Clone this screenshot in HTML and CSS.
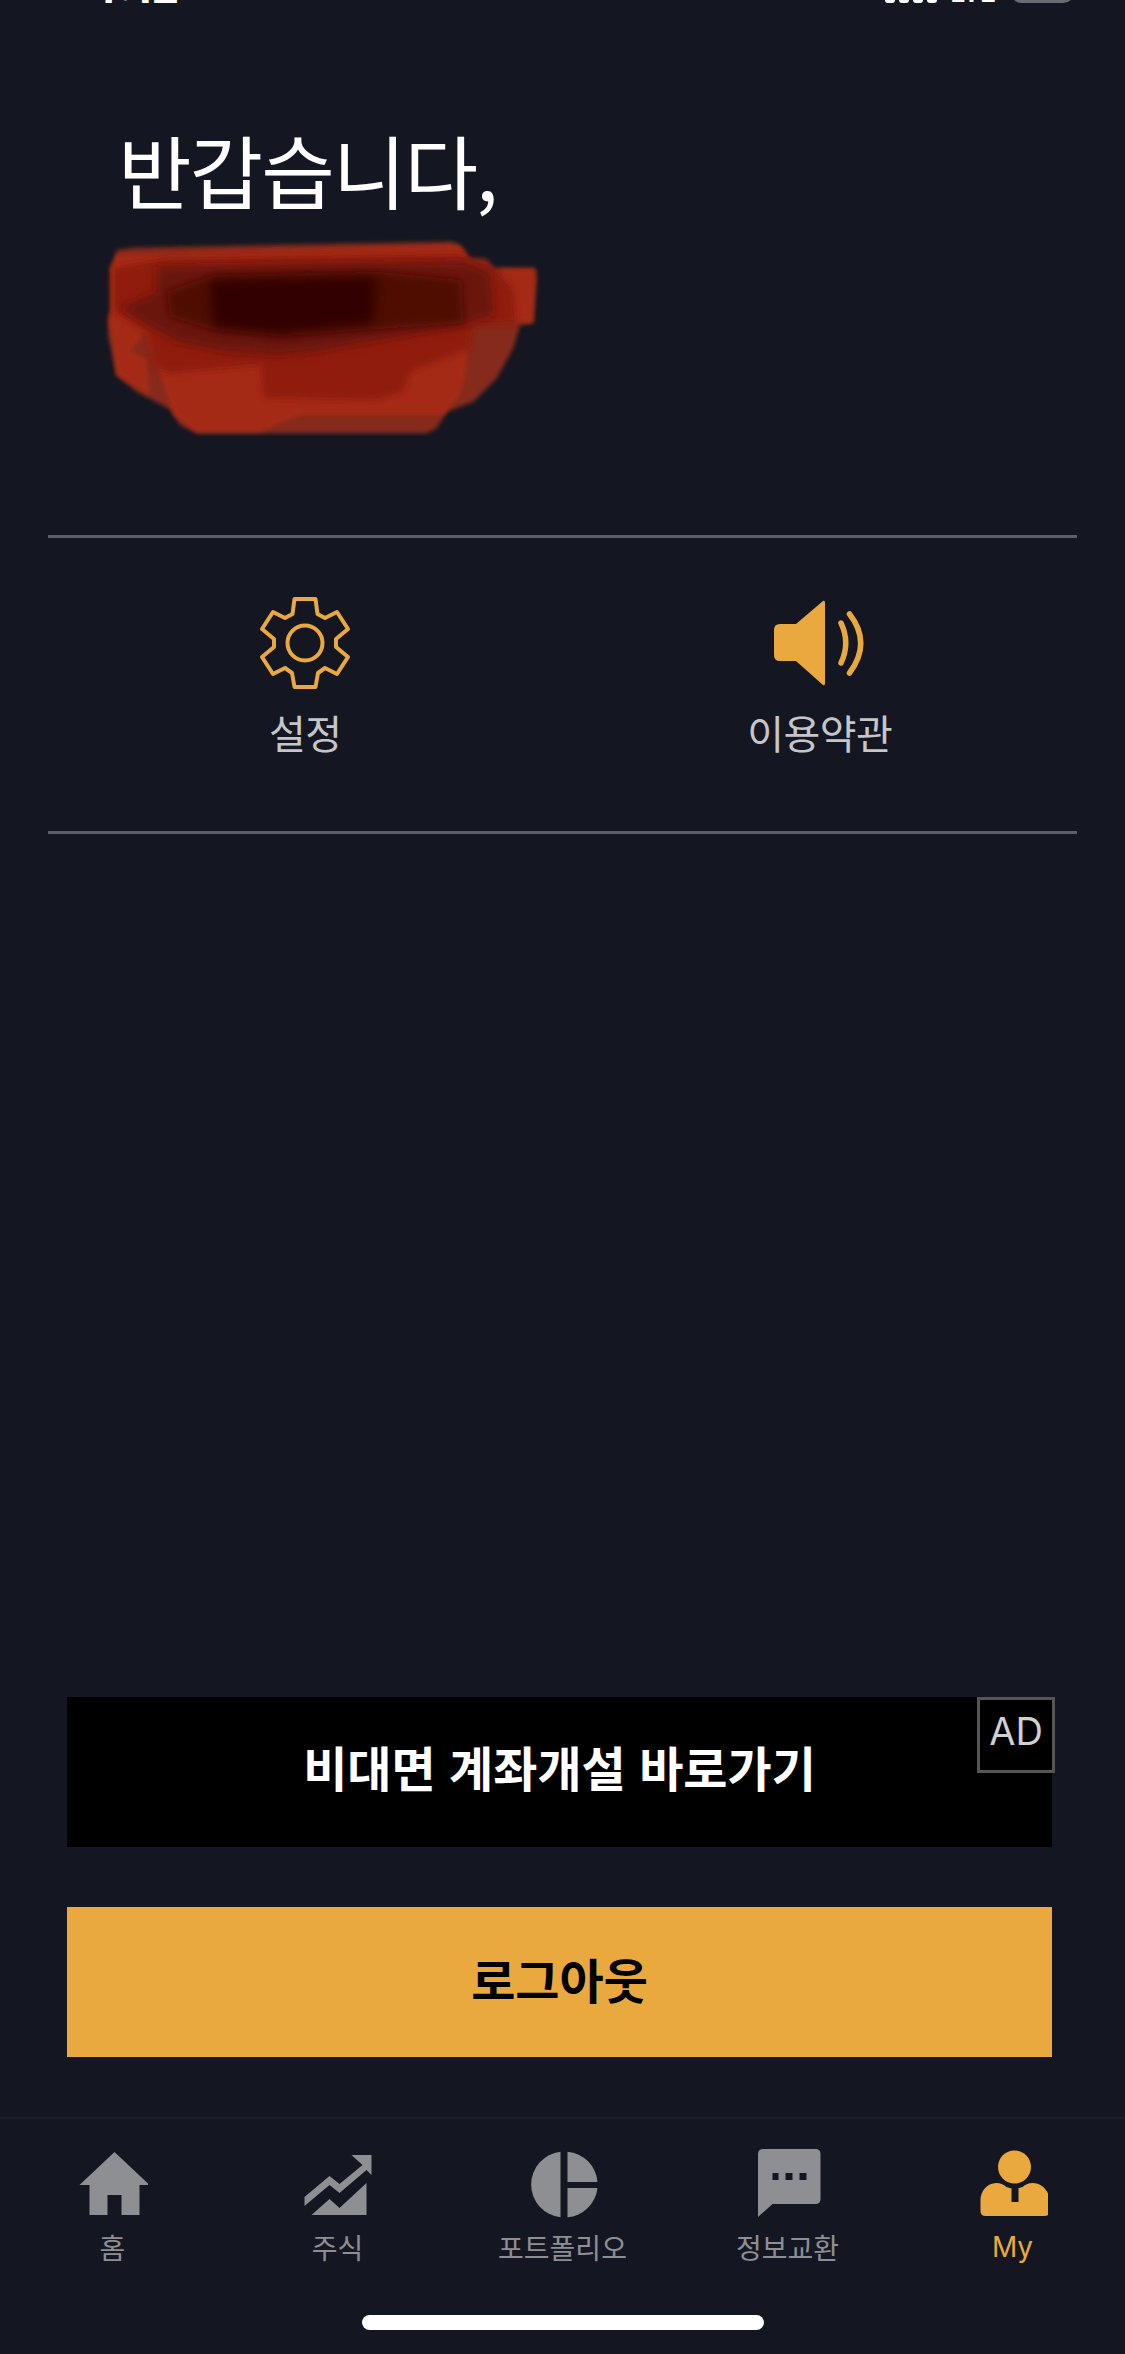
FILE: index.html
```html
<!DOCTYPE html>
<html lang="ko">
<head>
<meta charset="utf-8">
<title>My</title>
<link rel="stylesheet" href="styles.css">
</head>
<body>
<div class="page">
  <div class="status">
    <span class="time">4:12</span>
    <div class="status-right">
      <div class="signal"><i></i><i></i><i></i><i></i></div>
      <span class="lte">LTE</span>
      <div class="battery"></div>
    </div>
  </div>

  <section class="greeting">
    <h1 class="hello">반갑습니다,</h1>
    <svg class="scribble" viewBox="0 0 1350 615" aria-hidden="true">
      <defs>
        <filter id="b1" x="-5%" y="-10%" width="110%" height="120%"><feGaussianBlur stdDeviation="6"/></filter>
        <filter id="b2" x="-5%" y="-10%" width="110%" height="120%"><feGaussianBlur stdDeviation="9"/></filter>
        <filter id="b3" x="-10%" y="-20%" width="120%" height="140%"><feGaussianBlur stdDeviation="12"/></filter>
        <filter id="b4" x="-20%" y="-30%" width="140%" height="160%"><feGaussianBlur stdDeviation="18"/></filter>
      </defs>
      <path filter="url(#b1)" fill="#86291a" d="M50 45 100 38 1060 20 1100 50 1105 68 1160 72 1180 98 1305 100 1310 130 1300 265 1260 270 1240 340 1190 430 1120 500 1040 530 1010 580 980 595H290L240 570 215 525 110 470 50 420 25 300V240L40 225 35 100Z"/>
      <path filter="url(#b1)" fill="#a52c16" d="M50 60 1080 30 1100 70 1100 400 1080 480 1030 540 600 540 480 590H290L220 540 200 480 140 300 30 280V100Z"/>
      <path filter="url(#b1)" fill="#a52c16" d="M1200 102H1305L1298 262H1240ZM28 250 130 300 90 350 140 370 150 480 50 420Z"/>
      <path filter="url(#b2)" fill="#8f1d0e" d="M40 100 200 70 1080 60 1180 100 1240 160 1250 265 1120 270 1110 340 930 410 910 470 830 495 490 488 480 390 210 415 160 400 140 290 40 225Z"/>
      <path filter="url(#b3)" fill="#6a1208" d="M170 95 1090 80 1170 110 1180 240 1090 270 640 350 540 360 380 350 230 320 60 220 170 170Z"/>
      <path filter="url(#b3)" fill="#500905" d="M200 170 340 120 840 110 1085 135 1090 265 800 285 540 305 340 285 210 245Z"/>
      <path filter="url(#b4)" fill="#330200" d="M330 135 830 125 820 265 540 295 340 275Z"/>
    </svg>
  </section>

  <nav class="menu">
    <a class="menu-item">
      <svg class="menu-icon" viewBox="0 0 90 92" aria-hidden="true">
        <path class="gear" d="M34.500 2H55.500L57.500 17 65 21 77 15 88 32 76 42V50L88 60 77 77 65 71 58 76 55.500 90H34.500L32 76 25 71 13 77 2 60 14 50V42L2 32 13 15 25 21 32.500 17Z"/>
        <circle class="gear" cx="45" cy="46" r="17.500"/>
      </svg>
      <span class="menu-label">설정</span>
    </a>
    <a class="menu-item">
      <svg class="menu-icon" viewBox="772 596 96 92" aria-hidden="true">
        <path class="speaker" d="M780 623H796L823 600Q825 599 825 602V682Q825 685 823 684L796 660H780Q774 660 774 654V629Q774 623 780 623Z"/>
        <path class="wave" d="M841 622Q850.500 642 841 662M849.500 613Q872 642 849.500 672"/>
      </svg>
      <span class="menu-label">이용약관</span>
    </a>
  </nav>

  <div class="actions">
    <a class="banner">
      <span class="banner-text">비대면 계좌개설 바로가기</span>
      <span class="ad-tag">AD</span>
    </a>
    <button class="logout" type="button">로그아웃</button>
  </div>

  <footer class="tabbar">
    <div class="tabs">
      <a class="tab">
        <svg class="tab-icon" viewBox="77.500 2149 70 70" aria-hidden="true">
          <path d="M114 2152 149 2185H139V2215H121V2195H107V2215H89V2185H79Z"/>
        </svg>
        <span>홈</span>
      </a>
      <a class="tab">
        <svg class="tab-icon" viewBox="302.500 2149 70 70" aria-hidden="true">
          <path d="M351 2155H371V2175L366 2170 339 2193 329 2185 304 2206V2197L329 2176 339 2184 362 2165Z"/>
          <path d="M311 2215 329 2199 339 2208 366 2183V2215Z"/>
        </svg>
        <span>주식</span>
      </a>
      <a class="tab">
        <svg class="tab-icon" viewBox="527.500 2149 70 70" aria-hidden="true">
          <path d="M560 2151.700A33 33 0 0 0 560 2217.300Z"/>
          <path d="M567 2151.700A33 33 0 0 1 597 2182H567Z"/>
          <path d="M567 2188H597A33 33 0 0 1 567 2217.300Z"/>
        </svg>
        <span>포트폴리오</span>
      </a>
      <a class="tab">
        <svg class="tab-icon" viewBox="752.500 2149 70 70" aria-hidden="true">
          <path d="M763 2149H815Q820 2149 820 2154V2199Q820 2204 815 2204H772L757.500 2217V2154Q757.500 2149 763 2149Z"/>
          <path class="chat-dots" d="M772 2173H778V2180H772ZM785 2173H792V2180H785ZM799 2173H806V2180H799Z"/>
        </svg>
        <span>정보교환</span>
      </a>
      <a class="tab tab-active">
        <svg class="tab-icon" viewBox="977.500 2149 70 70" aria-hidden="true">
          <circle cx="1014" cy="2167" r="16.500"/>
          <path d="M996 2183C1000 2183 1004 2185 1006 2187Q1014 2190 1022 2187C1024 2185 1028 2183 1032 2183 1042 2183 1049 2192 1049 2200V2211Q1049 2216 1044 2216H985Q980 2216 980 2211V2200C980 2192 986 2183 996 2183Z"/>
          <path class="tie" d="M1011 2188H1018V2202H1011Z"/>
        </svg>
        <span>My</span>
      </a>
    </div>
    <div class="home-bar"></div>
  </footer>
</div>
</body>
</html>
```

FILE: styles.css
```css
* { box-sizing: border-box; }

html, body {
  margin: 0;
  padding: 0;
  background: #141722;
}

body {
  font-family: "Noto Sans CJK KR", "Noto Sans", sans-serif;
}

.page {
  width: 1125px;
  height: 2354px;
  display: flex;
  flex-direction: column;
  overflow: hidden;
  background: #141722;
}

/* status bar, cut off by the top of the picture */
.status {
  height: 3px;
  flex: none;
  display: flex;
  justify-content: space-between;
  align-items: flex-end;
  padding: 0 50px 0 88px;
  overflow: hidden;
  color: #fff;
}

.time {
  font-family: "Inter", sans-serif;
  font-weight: 700;
  font-size: 44px;
  line-height: 44px;
  flex: none;
  margin-bottom: -8px;
}

.status-right {
  display: flex;
  align-items: flex-end;
  gap: 14px;
}

.signal {
  display: flex;
  gap: 4px;
}

.signal i {
  display: block;
  width: 10px;
  height: 3px;
  background: #fff;
  border-radius: 0 0 5px 5px;
}

.lte {
  font-family: "Inter", sans-serif;
  font-weight: 700;
  font-size: 26px;
  line-height: 26px;
  margin-bottom: -3px;
}

.battery {
  width: 65px;
  height: 40px;
  border: 3px solid #6a6b73;
  border-radius: 12px;
}

.greeting {
  flex: none;
  height: 532px;
  padding: 110px 0 0 118px;
  display: flex;
  flex-direction: column;
  align-items: flex-start;
}

.hello {
  margin: 0;
  color: #fff;
  font-weight: 400;
  font-size: 80px;
  line-height: 110px;
  letter-spacing: -2px;
}

.scribble {
  display: block;
  width: 450px;
  height: 205px;
  margin: 12px 0 0 -18px;
}

.menu {
  flex: none;
  height: 299px;
  margin: 0 48px;
  border-top: 3px solid #5b5d67;
  border-bottom: 3px solid #5b5d67;
  display: grid;
  grid-template-columns: 1fr 1fr;
  padding-top: 59px;
}

.menu-item {
  display: flex;
  flex-direction: column;
  align-items: center;
}

.menu-icon {
  display: block;
  height: 92px;
  width: 96px;
}

.menu-label {
  margin-top: 13px;
  font-size: 40px;
  line-height: 60px;
  color: #c6c6c9;
  letter-spacing: -0.5px;
}

.gear {
  fill: none;
  stroke: #e9a93f;
  stroke-width: 4;
  stroke-linejoin: round;
}

.speaker {
  fill: #e9a93f;
}

.wave {
  fill: none;
  stroke: #e9a93f;
  stroke-width: 5.500;
  stroke-linecap: round;
}

.actions {
  flex: none;
  margin-top: 863px;
  padding: 0 73px 0 67px;
  display: flex;
  flex-direction: column;
  gap: 60px;
}

.banner {
  position: relative;
  height: 150px;
  background: #000;
  display: flex;
  align-items: center;
  justify-content: center;
  padding-bottom: 12px;
}

.banner-text {
  color: #fff;
  font-weight: 700;
  font-size: 48px;
  line-height: 60px;
}

.ad-tag {
  position: absolute;
  top: 0;
  right: -3px;
  width: 78px;
  height: 76px;
  border: 3px solid #555;
  color: #d0d0d0;
  font-family: "Inter", sans-serif;
  font-size: 38px;
  line-height: 62px;
  text-align: center;
}

.logout {
  height: 150px;
  width: 100%;
  border: 0;
  padding: 0 0 8px;
  background: #e9a93f;
  color: #000;
  font-family: inherit;
  font-weight: 700;
  font-size: 48px;
  line-height: 60px;
}

.tabbar {
  flex: none;
  margin-top: 60px;
  height: 237px;
  border-top: 2px solid #1b1e29;
}

.tabs {
  display: grid;
  grid-template-columns: repeat(5, 225px);
  padding-top: 30px;
}

.tab {
  display: flex;
  flex-direction: column;
  align-items: center;
  color: #8e8f93;
  font-size: 28px;
  line-height: 40px;
}

.tab-active {
  color: #e9a93f;
  font-family: "Inter", "Noto Sans", sans-serif;
}

.tab-icon {
  display: block;
  width: 70px;
  height: 70px;
  fill: #8e8f93;
  margin-bottom: 8px;
}

.tab-active .tab-icon {
  fill: #e9a93f;
}

.chat-dots, .tie {
  fill: #141722;
}

.home-bar {
  width: 402px;
  height: 15px;
  margin: 48px auto 0;
  border-radius: 8px;
  background: #fff;
}
```
